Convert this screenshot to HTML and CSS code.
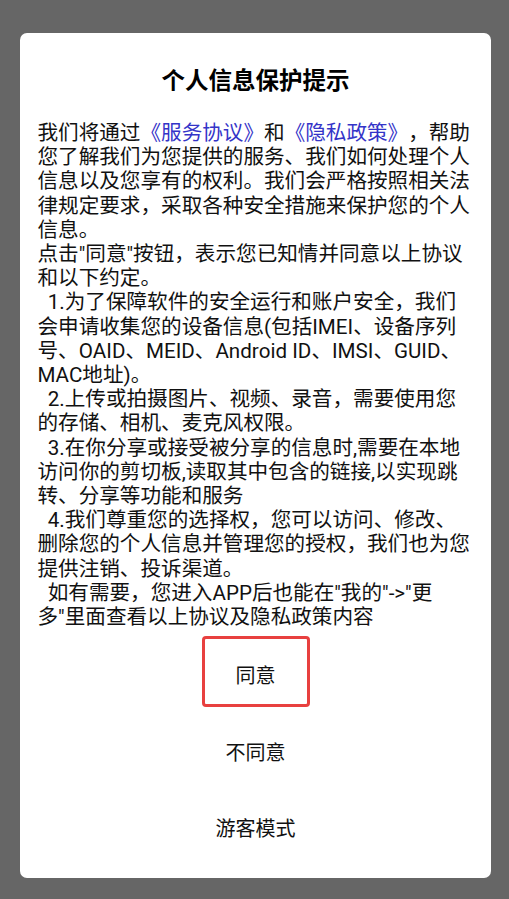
FILE: index.html
```html
<!DOCTYPE html>
<html lang="zh-CN">
<head>
<meta charset="utf-8">
<title>个人信息保护提示</title>
<link rel="stylesheet" href="styles.css">
</head>
<body>
<div class="screen">
  <div class="dialog">
    <h1 class="title">个人信息保护提示</h1>
    <div class="content"><span class="line">我们将通过<span class="link">《服务协议》</span>和<span class="link">《隐私政策》</span>，帮助</span><span class="line">您了解我们为您提供的服务、我们如何处理个人</span><span class="line">信息以及您享有的权利。我们会严格按照相关法</span><span class="line">律规定要求，采取各种安全措施来保护您的个人</span><span class="line">信息。</span><span class="line">点击"同意"按钮，表示您已知情并同意以上协议</span><span class="line">和以下约定。</span><span class="line">  1.为了保障软件的安全运行和账户安全，我们</span><span class="line">会申请收集您的设备信息(包括IMEI、设备序列</span><span class="line">号、OAID、MEID、Android ID、IMSI、GUID、</span><span class="line">MAC地址)。</span><span class="line">  2.上传或拍摄图片、视频、录音，需要使用您</span><span class="line">的存储、相机、麦克风权限。</span><span class="line">  3.在你分享或接受被分享的信息时,需要在本地</span><span class="line">访问你的剪切板,读取其中包含的链接,以实现跳</span><span class="line">转、分享等功能和服务</span><span class="line">  4.我们尊重您的选择权，您可以访问、修改、</span><span class="line">删除您的个人信息并管理您的授权，我们也为您</span><span class="line">提供注销、投诉渠道。</span><span class="line">  如有需要，您进入APP后也能在"我的"-&gt;"更</span><span class="line">多"里面查看以上协议及隐私政策内容</span></div>
    <div class="actions">
      <button class="btn btn-agree" type="button">同意</button>
      <button class="btn btn-plain" type="button">不同意</button>
      <button class="btn btn-plain" type="button">游客模式</button>
    </div>
  </div>
</div>
</body>
</html>
```

FILE: styles.css
```css
html, body {
  margin: 0;
  padding: 0;
  background: #666666;
}

body {
  font-family: Roboto, "Noto Sans CJK SC", sans-serif;
  color: #111111;
  text-spacing-trim: space-all;
  font-kerning: none;
}

.screen {
  width: 509px;
  height: 899px;
  box-sizing: border-box;
  padding: 33px 18px 21px 20px;
}

.dialog {
  width: 471px;
  height: 845px;
  box-sizing: border-box;
  background: #ffffff;
  border-radius: 7px;
  padding: 0 0 0 17.5px;
  display: flex;
  flex-direction: column;
}

.title {
  margin: 0;
  padding: 30px 17.5px 0 0;
  height: 88px;
  box-sizing: border-box;
  font-size: 23.5px;
  line-height: 32px;
  font-weight: 700;
  text-align: center;
  color: #000000;
  font-family: "Noto Sans CJK SC", sans-serif;
}

.content {
  font-size: 20.6px;
  line-height: 24.2px;
  color: #111111;
  text-spacing-trim: space-all;
}

.line {
  display: block;
  white-space: pre;
}

.link {
  color: #3434c8;
}

.actions {
  display: flex;
  flex-direction: column;
  align-items: center;
  margin-left: -17.5px;
  padding-top: 7px;
}

.btn {
  font-family: "Noto Sans CJK SC", sans-serif;
  font-size: 20px;
  color: #111111;
  background: transparent;
  border: none;
  padding: 0;
  margin: 0;
  display: flex;
  align-items: center;
  justify-content: center;
}

.btn-agree {
  width: 108px;
  height: 71px;
  box-sizing: border-box;
  border: 3px solid #e8403f;
  border-radius: 4px;
  padding-top: 6px;
  margin-bottom: 6px;
}

.btn-plain {
  width: 200px;
  height: 76px;
}
```
